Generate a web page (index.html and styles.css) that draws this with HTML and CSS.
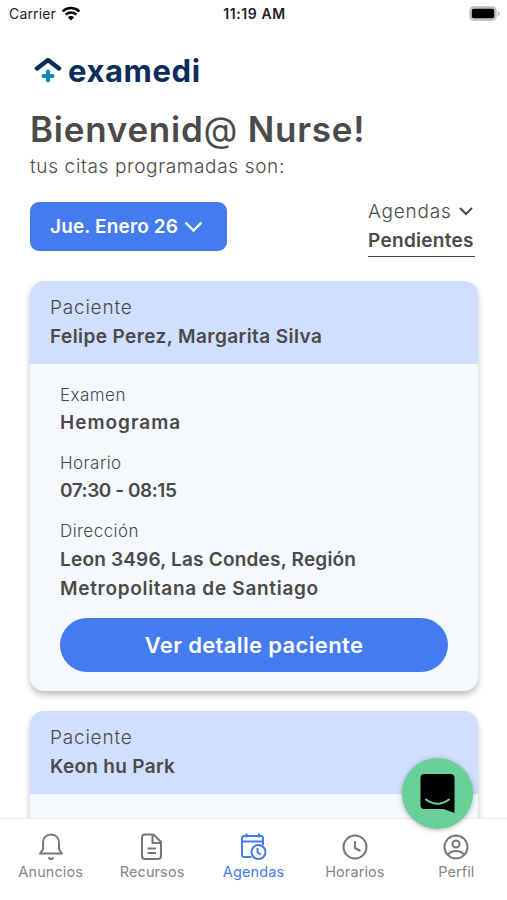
FILE: index.html
```html
<!doctype html>
<html lang="es">
    <head>
        <meta charset="utf-8">
        <title>Examedi</title>
        <link rel="stylesheet" href="styles.css">
    </head>
    <body>
        <header class="status-bar">
            <div class="carrier">
                <span>Carrier</span>
                <svg width="20" height="15" viewBox="0 0 20 15" fill="none" stroke="#000" stroke-width="2.4">
                    <path d="M1.6 5.5a12 12 0 0 1 16.8 0"/>
                    <path d="M4.7 8.7a7.6 7.6 0 0 1 10.6 0"/>
                    <path d="M10 14.5L6.9 11.3a4.4 4.4 0 0 1 6.2 0z" fill="#000" stroke="none"/>
                </svg>
            </div>
            <span class="time">11:19 AM</span>
            <svg class="battery" width="31" height="15" viewBox="0 0 31 15">
                <rect x="1" y="1" width="26" height="13" rx="3.6" fill="#ccc" stroke="#bbb" stroke-width="1.4"/>
                <rect x="2.800" y="2.800" width="22.400" height="9.400" rx="1.800"/>
                <path d="M28.800 5v5q2-1 2-2.500t-2-2.500z" fill="#bbb"/>
            </svg>
        </header>

        <main>
            <div class="logo">
                <svg width="28" height="26" viewBox="0 0 28 26" fill="none">
                    <path d="M3 11.500L14 3L25 11.500" stroke="#0a2d5c" stroke-width="4.400" stroke-linecap="round" stroke-linejoin="round"/>
                    <path d="M14 14.500v9M9.500 19h9" stroke="#1187c3" stroke-width="4" stroke-linecap="round"/>
                </svg>
                <span>examedi</span>
            </div>
            <h1>Bienvenid<span>@</span> Nurse!</h1>
            <p class="subtitle">tus citas programadas son:</p>

            <div class="filters">
                <button class="date">
                    <span>Jue. Enero 26</span>
                    <svg width="19" height="12" viewBox="0 0 19 12" fill="none" stroke="#fff" stroke-width="2.400"><path d="M1.500 1.500l8 8 8-8"/></svg>
                </button>
                <div class="agendas">
                    <p>
                        <span>Agendas</span>
                        <svg width="14" height="9" viewBox="0 0 14 9" fill="none" stroke="#4a4a4a" stroke-width="2"><path d="M1 1l6 6 6-6"/></svg>
                    </p>
                    <b>Pendientes</b>
                </div>
            </div>

            <article class="card">
                <div class="card-head">
                    <p>Paciente</p>
                    <b class="name">Felipe Perez, Margarita Silva</b>
                </div>
                <div class="card-body">
                    <p>Examen</p>
                    <b class="exam">Hemograma</b>
                    <p>Horario</p>
                    <b class="hours">07:30 - 08:15</b>
                    <p>Dirección</p>
                    <b class="address">Leon 3496, Las Condes, Región<br><span>Metropolitana de Santiago</span></b>
                    <button class="detail">Ver detalle paciente</button>
                </div>
            </article>

            <article class="card">
                <div class="card-head">
                    <p>Paciente</p>
                    <b>Keon hu Park</b>
                </div>
                <div class="card-body"></div>
            </article>
        </main>

        <!-- Chat -->
        <div class="chat">
            <svg width="36" height="40" viewBox="0 0 36 40">
                <path d="M4.500 0h26a4 4 0 0 1 4 4v35l-11-4h-19a4 4 0 0 1-4-4V4a4 4 0 0 1 4-4z"/>
                <path d="M6 25.500q11.500 8.500 23 0" fill="none" stroke="#69d197" stroke-width="2" stroke-linecap="round"/>
            </svg>
        </div>

        <nav>
            <a>
                <svg width="28" height="28" viewBox="0 0 28 28">
                    <path d="M3 21.500h22L22 17.500V11c0-5-3-8.500-8-8.500S6 6 6 11v6.500z"/>
                    <path d="M11.500 25.500q2.500 3 5 0"/>
                </svg>
                <span>Anuncios</span>
            </a>
            <a>
                <svg width="28" height="28" viewBox="0 0 28 28">
                    <path d="M7 2.500h8.500l7.500 7.500v14a3 3 0 0 1-3 3H7a3 3 0 0 1-3-3v-18.500a3 3 0 0 1 3-3z"/>
                    <path d="M14.500 2.500v8.500h8.500M9.500 16.500h8.500M9.500 21h8.500"/>
                </svg>
                <span>Recursos</span>
            </a>
            <a class="active">
                <svg width="28" height="28" viewBox="0 0 28 28">
                    <path d="M12.500 25H5a2 2 0 0 1-2-2V6a2 2 0 0 1 2-2h17a2 2 0 0 1 2 2v7M3 9.500h21M7.500 1.500v4M20 1.500v4"/>
                    <circle cx="19.500" cy="20" r="7"/>
                    <path d="M18.500 16v4.500l3.500 2"/>
                </svg>
                <span>Agendas</span>
            </a>
            <a>
                <svg width="28" height="28" viewBox="0 0 28 28">
                    <circle cx="14" cy="15" r="11.500"/>
                    <path d="M14 9v7l5.500 3"/>
                </svg>
                <span>Horarios</span>
            </a>
            <a>
                <svg width="28" height="28" viewBox="0 0 28 28">
                    <circle cx="14" cy="15" r="11.500"/>
                    <circle cx="14" cy="12" r="3.500"/>
                    <path d="M6 23q2.500-4 8-4t8 4"/>
                </svg>
                <span>Perfil</span>
            </a>
        </nav>
    </body>
</html>
```
FILE: styles.css
```css
* { margin: 0; padding: 0; box-sizing: border-box; }

body {
    height: 100vh;
    display: flex;
    flex-direction: column;
    overflow: hidden;
    background: #fff;
    color: #4a4a4a;
    font-family: Inter, sans-serif;
    white-space: nowrap;
}

svg { display: block; flex-shrink: 0; }
b { display: block; font-weight: 600; letter-spacing: .3px; }
button {
    border: none;
    background: #447bef;
    color: #fff;
    font-family: inherit;
    font-weight: 600;
}

.status-bar {
    height: 28px;
    flex-shrink: 0;
    display: grid;
    grid-template-columns: 1fr auto 1fr;
    align-items: center;
    padding: 0 7px 2px 9px;
    font-size: 14px;
    color: #222;
}

.carrier { display: flex; align-items: center; gap: 5px; letter-spacing: .15px; }
.time { font-weight: 600; letter-spacing: .6px; }
.battery { justify-self: end; }

main {
    flex: 1;
    min-height: 0;
    overflow: hidden;
    padding: 27px 29px 0 30px;
}

.logo {
    display: flex;
    align-items: center;
    gap: 6px;
    height: 30px;
    padding-left: 4px;
    font-size: 31px;
    font-weight: 700;
    letter-spacing: .6px;
    color: #0a2d5c;
}

h1 {
    margin-top: 23px;
    font-size: 35px;
    line-height: 42px;
    font-weight: 600;
    letter-spacing: .75px;
}

h1 span { font-weight: 400; }

.subtitle {
    font-size: 19px;
    line-height: 34px;
    font-weight: 300;
    letter-spacing: .65px;
}

.filters {
    display: flex;
    justify-content: space-between;
    align-items: flex-start;
    margin-top: 18px;
    height: 59px;
}

.date {
    display: flex;
    align-items: center;
    gap: 6px;
    width: 197px;
    height: 49px;
    padding-left: 20px;
    border-radius: 9px;
    font-size: 19px;
    letter-spacing: .15px;
}

.agendas {
    width: 107px;
    height: 60px;
    margin-right: 3px;
    margin-top: -5px;
    border-bottom: 1px solid #4a4a4a;
    font-size: 19px;
    line-height: 29px;
}

.agendas p {
    display: flex;
    align-items: center;
    gap: 7px;
    font-weight: 300;
    letter-spacing: .8px;
}

.card {
    margin-top: 20px;
    border-radius: 14px;
    background: #f5f9fe;
    box-shadow: 0 4px 6px rgba(0, 0, 0, .25);
    overflow: hidden;
}

.card-head {
    height: 83px;
    padding: 12px 20px;
    background: #d0dffd;
    font-size: 19px;
    line-height: 29px;
}

.card-head p { font-weight: 300; letter-spacing: .8px; }
.card-head .name { letter-spacing: .42px; }

.card-body {
    padding: 17px 30px 19px;
    font-size: 19px;
    line-height: 29px;
}

.card-body p {
    font-size: 17px;
    line-height: 29px;
    font-weight: 300;
    letter-spacing: .45px;
}

.card-body b { line-height: 25px; margin-bottom: 14px; }
.card-body .exam { letter-spacing: 1px; }
.card-body .hours { letter-spacing: -.45px; }
.card-body .address {
    margin-top: -1px;
    line-height: 29px;
    margin-bottom: 15px;
    letter-spacing: .2px;
}
.address span { letter-spacing: .7px; }

.detail {
    display: block;
    width: 100%;
    height: 54px;
    border-radius: 27px;
    font-size: 22px;
    letter-spacing: .35px;
}

.chat {
    position: absolute;
    z-index: 1;
    left: 402px;
    top: 758px;
    width: 71px;
    height: 71px;
    display: flex;
    align-items: center;
    justify-content: center;
    border-radius: 50%;
    background: #69d197;
    box-shadow: 0 1px 5px rgba(0, 0, 0, .3);
}

nav {
    height: 82px;
    flex-shrink: 0;
    display: grid;
    grid-template-columns: repeat(5, 1fr);
    padding-top: 13px;
    border-top: 1px solid #e9ebee;
    background: #fff;
}

nav a {
    display: flex;
    flex-direction: column;
    align-items: center;
    font-size: 14.500px;
    line-height: 24px;
    letter-spacing: .1px;
    color: #858585;
}

nav svg { fill: none; stroke: #777; stroke-width: 2; stroke-linejoin: round; }
nav .active { color: #447bef; }
nav .active svg { stroke: #447bef; }
```
